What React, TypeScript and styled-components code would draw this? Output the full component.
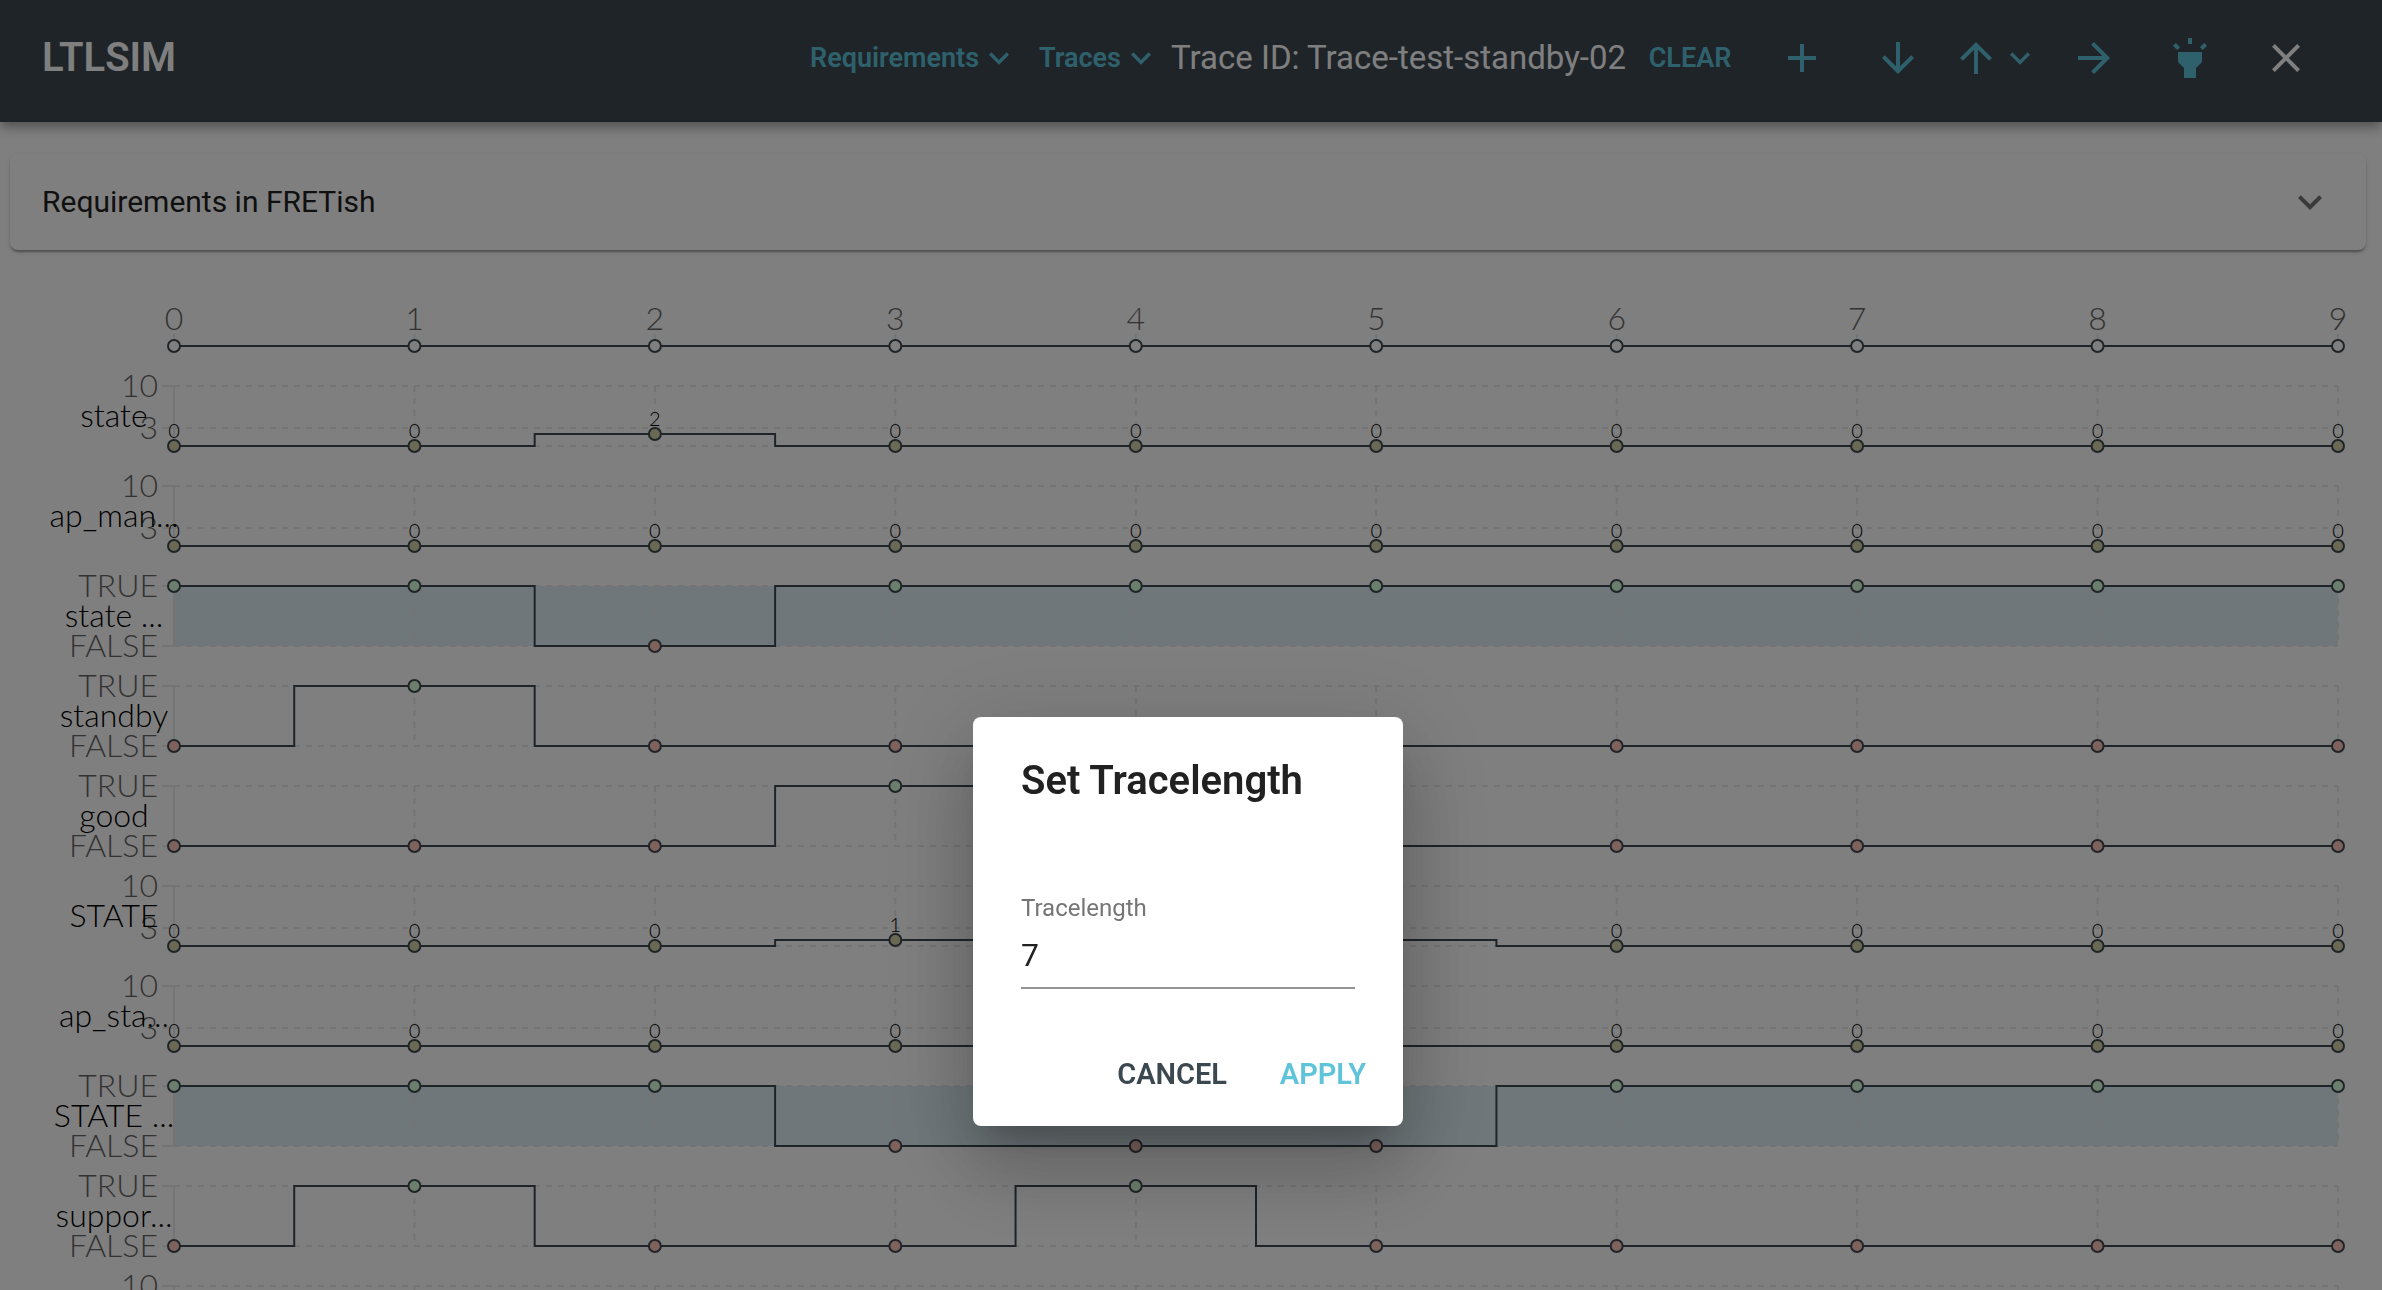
import React, { useLayoutEffect, useRef, useState } from 'react';
import styled, { createGlobalStyle } from 'styled-components';

const color = {
  primary: '#3c4850',
  accent: '#5fc3d9',
  text: '#212121',
  textMuted: '#757575',
  grid: '#ebe8e8',
  area: '#deeef4',
};

const GlobalStyle = createGlobalStyle`
  *, *::before, *::after { box-sizing: border-box; }
  body { margin: 0; background: #fff; font-family: Roboto, "Liberation Sans", sans-serif; }
  button, input { font-family: inherit; }
`;

/* ---------- icons ---------- */

const paths = {
  expand: 'M16.59 8.59L12 13.17 7.41 8.59 6 10l6 6 6-6z',
  add: 'M19 13h-6v6h-2v-6H5v-2h6V5h2v6h6v2z',
  down: 'M20 12l-1.41-1.41L13 16.17V4h-2v12.17l-5.58-5.59L4 12l8 8 8-8z',
  up: 'M4 12l1.41 1.41L11 7.83V20h2V7.83l5.58 5.59L20 12l-8-8-8 8z',
  forward: 'M12 4l-1.41 1.41L16.17 11H4v2h12.17l-5.58 5.59L12 20l8-8z',
  highlight:
    'M6 14l3 3v5h6v-5l3-3V9H6zm5-12h2v3h-2zM3.5 5.875L4.914 4.46l2.12 2.122L5.62 7.997zm13.46.71l2.123-2.12 1.414 1.414L18.375 8z',
  close:
    'M19 6.41L17.59 5 12 10.59 6.41 5 5 6.41 10.59 12 5 17.59 6.41 19 12 13.41 17.59 19 19 17.59 13.41 12z',
};

const IconSvg = styled.svg<{ $size: number }>`
  display: block;
  flex: none;
  width: ${(p) => p.$size}px;
  height: ${(p) => p.$size}px;
  fill: currentColor;
`;

function Icon({ name, size = 48 }: { name: keyof typeof paths; size?: number }) {
  return (
    <IconSvg $size={size} viewBox="0 0 24 24" aria-hidden="true">
      <path d={paths[name]} />
    </IconSvg>
  );
}

/* ---------- page ---------- */

const Page = styled.div`
  height: 100vh;
  overflow: hidden;
  display: flex;
  flex-direction: column;
`;

const AppBar = styled.header`
  flex: none;
  position: relative;
  display: flex;
  align-items: center;
  padding: 10px 48px 16px 42px;
  background: ${color.primary};
  color: #fff;
  box-shadow: 0 4px 8px -2px rgba(0, 0, 0, 0.2), 0 8px 10px 0 rgba(0, 0, 0, 0.14),
    0 2px 20px 0 rgba(0, 0, 0, 0.12);
`;

const Title = styled.h1`
  flex: 1;
  margin: 0;
  font-size: 40px;
  font-weight: 600;
  line-height: 48px;
`;

const BarButton = styled.button<{ $pad?: number; $min?: number }>`
  display: flex;
  align-items: center;
  justify-content: center;
  height: 64px;
  min-width: ${(p) => p.$min ?? 0}px;
  padding: 0 ${(p) => p.$pad ?? 10}px;
  border: 0;
  background: none;
  color: ${color.accent};
  font-size: 27px;
  font-weight: 600;
  line-height: 40px;
  cursor: pointer;
`;

const IconButton = styled.button<{ $light?: boolean }>`
  display: grid;
  place-items: center;
  width: 96px;
  height: 96px;
  padding: 0;
  border: 0;
  background: none;
  color: ${(p) => (p.$light ? '#fff' : color.accent)};
  cursor: pointer;
`;

const TraceId = styled.span`
  font-size: 33px;
  line-height: 40px;
  white-space: nowrap;
`;

const Panel = styled.button`
  flex: none;
  display: flex;
  align-items: center;
  justify-content: space-between;
  height: 96px;
  margin: 32px 16px 0 10px;
  padding: 0 32px;
  border: 0;
  border-radius: 8px;
  background: #fff;
  color: ${color.text};
  font-size: 30px;
  line-height: 40px;
  text-align: left;
  cursor: pointer;
  box-shadow: 0 4px 2px -2px rgba(0, 0, 0, 0.2), 0 2px 2px 0 rgba(0, 0, 0, 0.14),
    0 2px 6px 0 rgba(0, 0, 0, 0.12);

  svg {
    color: ${color.textMuted};
  }
`;

/* ---------- traces ---------- */

const Traces = styled.main`
  flex: 1;
  min-height: 0;
  overflow: hidden;
  padding-top: 46px;
`;

const Chart = styled.svg<{ $height: number }>`
  display: block;
  width: 100%;
  height: ${(p) => p.$height}px;
  overflow: visible;
  font-family: Lato, "Liberation Sans", sans-serif;
  font-weight: 300;
`;

const TickText = styled.text`
  font-size: 32px;
  fill: #666;
`;

const NameText = styled.text`
  font-size: 32px;
  fill: #000;
  text-anchor: middle;
`;

const ValueText = styled.text`
  font-size: 20px;
  fill: #000;
  text-anchor: middle;
`;

const GridLine = styled.line<{ $solid?: boolean }>`
  stroke: ${color.grid};
  stroke-width: 2;
  stroke-dasharray: ${(p) => (p.$solid ? 'none' : '6 6')};
`;

const TraceLine = styled.path`
  fill: none;
  stroke: ${color.primary};
  stroke-width: 2;
`;

const Dot = styled.circle<{ $fill: string }>`
  fill: ${(p) => p.$fill};
  stroke: ${color.primary};
  stroke-width: 2;
`;

const LEFT = 174;
const RIGHT = 44;
const NAME_X = 114;
const TOP = 16;
const PLOT = 60;
const STEPS = 10;

type Trace = { name: string; kind: 'number' | 'bool'; values: number[]; shaded?: boolean };

const traces: Trace[] = [
  { name: 'state', kind: 'number', values: [0, 0, 2, 0, 0, 0, 0, 0, 0, 0] },
  { name: 'ap_man...', kind: 'number', values: [0, 0, 0, 0, 0, 0, 0, 0, 0, 0] },
  { name: 'state ...', kind: 'bool', shaded: true, values: [1, 1, 0, 1, 1, 1, 1, 1, 1, 1] },
  { name: 'standby', kind: 'bool', values: [0, 1, 0, 0, 0, 0, 0, 0, 0, 0] },
  { name: 'good', kind: 'bool', values: [0, 0, 0, 1, 1, 0, 0, 0, 0, 0] },
  { name: 'STATE', kind: 'number', values: [0, 0, 0, 1, 1, 1, 0, 0, 0, 0] },
  { name: 'ap_sta...', kind: 'number', values: [0, 0, 0, 0, 0, 0, 0, 0, 0, 0] },
  { name: 'STATE ...', kind: 'bool', shaded: true, values: [1, 1, 1, 0, 0, 0, 1, 1, 1, 1] },
  { name: 'suppor...', kind: 'bool', values: [0, 1, 0, 0, 1, 0, 0, 0, 0, 0] },
  { name: '', kind: 'number', values: [0, 0, 0, 0, 0, 0, 0, 0, 0, 0] },
];

const steps = Array.from({ length: STEPS }, (_, i) => i);

function TimeAxis({ x }: { x: (i: number) => number }) {
  return (
    <Chart $height={74} role="img" aria-label="Time steps">
      {steps.map((i) => (
        <g key={i}>
          <GridLine $solid x1={x(i)} x2={x(i)} y1={38} y2={50} />
          <TickText x={x(i)} y={34} textAnchor="middle">
            {i}
          </TickText>
        </g>
      ))}
      <TraceLine d={`M${x(0)} 50H${x(STEPS - 1)}`} />
      {steps.map((i) => (
        <Dot key={i} $fill="#fff" cx={x(i)} cy={50} r={6} />
      ))}
    </Chart>
  );
}

function TraceRow({ trace, x }: { trace: Trace; x: (i: number) => number }) {
  const isNumber = trace.kind === 'number';
  const max = isNumber ? 10 : 1;
  const y = (v: number) => TOP + PLOT - (v / max) * PLOT;
  const ticks = isNumber
    ? [{ v: 10, t: '10' }, { v: 3, t: '3' }]
    : [{ v: 1, t: 'TRUE' }, { v: 0, t: 'FALSE' }];
  const lines = isNumber ? [10, 3, 0] : [1, 0];
  const end = x(STEPS - 1);

  // The value changes halfway between two time steps.
  let d = `M${x(0)} ${y(trace.values[0])}`;
  for (let i = 1; i < trace.values.length; i++) {
    if (trace.values[i] !== trace.values[i - 1]) {
      d += `H${x(i - 0.5)}V${y(trace.values[i])}`;
    }
  }
  d += `H${end}`;

  const dotFill = (v: number) => (isNumber ? '#d4d4a8' : v ? '#d8fed8' : '#ffc4b8');

  return (
    <Chart $height={100} role="img" aria-label={`Trace ${trace.name}`}>
      {trace.shaded && (
        <rect x={LEFT} y={TOP} width={Math.max(0, end - LEFT)} height={PLOT} fill={color.area} />
      )}
      {lines.map((v) => (
        <GridLine key={v} x1={LEFT} x2={end} y1={y(v)} y2={y(v)} />
      ))}
      {steps.slice(1).map((i) => (
        <GridLine key={i} x1={x(i)} x2={x(i)} y1={TOP} y2={TOP + PLOT} />
      ))}
      <GridLine $solid x1={LEFT} x2={LEFT} y1={TOP} y2={TOP + PLOT} />
      {ticks.map(({ v, t }) => (
        <g key={t}>
          <GridLine $solid x1={LEFT - 12} x2={LEFT} y1={y(v)} y2={y(v)} />
          <TickText x={LEFT - 16} y={y(v) + 11} textAnchor="end">
            {t}
          </TickText>
        </g>
      ))}
      <TraceLine d={d} />
      {trace.values.map((v, i) => (
        <g key={i}>
          <Dot $fill={dotFill(v)} cx={x(i)} cy={y(v)} r={6} />
          {isNumber && (
            <ValueText x={x(i)} y={y(v) - 8}>
              {v}
            </ValueText>
          )}
        </g>
      ))}
      {trace.name && (
        <NameText x={NAME_X} y={TOP + PLOT / 2 + 11}>
          {trace.name}
        </NameText>
      )}
    </Chart>
  );
}

function TraceView() {
  const ref = useRef<HTMLElement>(null);
  const [width, setWidth] = useState(0);

  useLayoutEffect(() => {
    const el = ref.current;
    if (!el) return;
    const measure = () => setWidth(el.clientWidth);
    measure();
    const observer = new ResizeObserver(measure);
    observer.observe(el);
    return () => observer.disconnect();
  }, []);

  const x = (i: number) => LEFT + (Math.max(0, width - LEFT - RIGHT) * i) / (STEPS - 1);

  return (
    <Traces ref={ref}>
      <TimeAxis x={x} />
      {traces.map((trace, i) => (
        <TraceRow key={i} trace={trace} x={x} />
      ))}
    </Traces>
  );
}

/* ---------- dialog ---------- */

const Backdrop = styled.div`
  position: fixed;
  inset: 0;
  display: flex;
  align-items: flex-start;
  justify-content: center;
  padding: 717px 6px 0 0;
  background: rgba(0, 0, 0, 0.5);
`;

const Dialog = styled.form`
  width: 430px;
  border-radius: 8px;
  background: #fff;
  color: ${color.text};
  box-shadow: 0 22px 30px -14px rgba(0, 0, 0, 0.2), 0 48px 76px 6px rgba(0, 0, 0, 0.14),
    0 18px 92px 16px rgba(0, 0, 0, 0.12);
`;

const DialogTitle = styled.h2`
  margin: 0;
  padding: 32px 48px;
  font-size: 40px;
  font-weight: 600;
  line-height: 64px;
`;

const Field = styled.div`
  display: flex;
  flex-direction: column;
  padding: 48px 48px 32px;

  label {
    color: ${color.textMuted};
    font-size: 24px;
    line-height: 30px;
  }

  input {
    height: 66px;
    padding: 10px 0;
    border: 0;
    border-bottom: 2px solid #949494;
    border-radius: 0;
    outline: 0;
    background: none;
    color: ${color.text};
    font-size: 32px;
  }
`;

const Actions = styled.div`
  display: flex;
  justify-content: flex-end;
  gap: 16px;
  padding: 16px;
`;

const DialogButton = styled.button<{ $accent?: boolean }>`
  min-width: 128px;
  height: 73px;
  padding: 0 16px;
  border: 0;
  background: none;
  color: ${(p) => (p.$accent ? color.accent : color.primary)};
  font-size: 29px;
  font-weight: 600;
  cursor: pointer;
`;

export default function App() {
  const [length, setLength] = useState('7');

  return (
    <>
      <GlobalStyle />
      <Page>
        <AppBar>
          <Title>LTLSIM</Title>
          <BarButton>
            Requirements
            <Icon name="expand" size={40} />
          </BarButton>
          <BarButton>
            Traces
            <Icon name="expand" size={40} />
          </BarButton>
          <TraceId>Trace ID: Trace-test-standby-02</TraceId>
          <BarButton $min={128}>CLEAR</BarButton>
          <IconButton aria-label="Add">
            <Icon name="add" />
          </IconButton>
          <IconButton aria-label="Load">
            <Icon name="down" />
          </IconButton>
          <BarButton $pad={6} aria-label="Save">
            <Icon name="up" />
            <Icon name="expand" size={40} />
          </BarButton>
          <IconButton aria-label="Next">
            <Icon name="forward" />
          </IconButton>
          <IconButton aria-label="Highlight">
            <Icon name="highlight" />
          </IconButton>
          <IconButton $light aria-label="Close">
            <Icon name="close" />
          </IconButton>
        </AppBar>
        <Panel aria-expanded="false">
          Requirements in FRETish
          <Icon name="expand" />
        </Panel>
        <TraceView />
      </Page>
      <Backdrop>
        <Dialog
          role="dialog"
          aria-modal="true"
          aria-labelledby="dialog-title"
          onSubmit={(e) => e.preventDefault()}
        >
          <DialogTitle id="dialog-title">Set Tracelength</DialogTitle>
          <Field>
            <label htmlFor="tracelength">Tracelength</label>
            <input id="tracelength" value={length} onChange={(e) => setLength(e.target.value)} />
          </Field>
          <Actions>
            <DialogButton type="button">CANCEL</DialogButton>
            <DialogButton type="submit" $accent>
              APPLY
            </DialogButton>
          </Actions>
        </Dialog>
      </Backdrop>
    </>
  );
}
